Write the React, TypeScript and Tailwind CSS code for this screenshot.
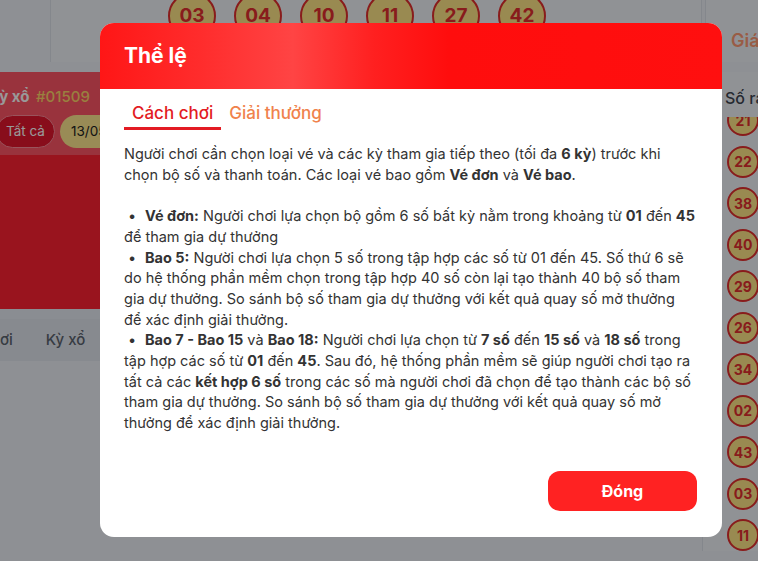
import * as React from "react";

const topBalls = ["03", "04", "10", "11", "27", "42"];
const sideBalls = ["21", "22", "38", "40", "29", "26", "34", "02", "43", "03", "11"];

const Bullet = () => <span className="inline-block w-[21px] pl-[4px]">•</span>;

const App = () => {
  const [tab, setTab] = React.useState(0);

  return (
    <div className="relative h-[561px] w-[758px] overflow-hidden bg-[#edf1f7] font-['Inter',sans-serif]">
      {/* Trang phía sau */}
      <div className="isolate flex flex-col gap-[10px]">
        <div className="flex h-[62px] gap-[3px] pl-[50px]">
          <div className="w-[652px] overflow-hidden border-x border-[#dde2ea] bg-[#f1f4f9]">
            <div className="-mt-[8px] flex gap-[18px] pl-[117px]">
              {topBalls.map((n) => (
                <div
                  key={n}
                  className="flex h-[48px] w-[48px] items-center justify-center rounded-full border-[2.5px] border-[#e3302f] bg-[#ffe788] text-[19px] font-bold text-[#e3302f]"
                >
                  {n}
                </div>
              ))}
            </div>
          </div>
          <div className="flex-1 overflow-hidden border-l border-[#dde2ea] bg-[#f1f4f9] pl-[25px] pt-[27px]">
            <span className="whitespace-nowrap text-[18px] font-semibold text-[#ff9a74]">Giá vé</span>
          </div>
        </div>

        <div className="flex gap-[12px]">
          <div className="-ml-[30px] w-[720px]">
            <div className="h-[83px] bg-[#ff5566] px-[19px] pt-[14px]">
              <div className="whitespace-nowrap text-[15px] font-bold text-white">
                Kỳ xổ <span className="ml-[3px] font-medium text-[#ffd56a]">#01509</span>
              </div>
              <div className="ml-[7px] mt-[6px] flex gap-[5px]">
                <span className="flex h-[33px] items-center rounded-full border border-[#ff8c99] bg-[#e3162d] px-[9px] text-[13.5px] text-white">
                  Tất cả
                </span>
                <span className="flex h-[33px] items-center rounded-full bg-[#ffe890] px-[11px] text-[13.5px] text-[#222]">
                  13/05
                </span>
              </div>
            </div>
            <div className="h-[154px] bg-[#ff2233]" />
            <div className="flex h-[52px] items-center whitespace-nowrap border-t-[10px] border-[#e6ebf3] bg-[#e2e7ef] text-[15px] font-medium text-[#5c6470]">
              <span className="ml-[-34px]">Người chơi</span>
              <span className="ml-[33px]">Kỳ xổ</span>
            </div>
          </div>
          <div className="flex-1 overflow-hidden border-l border-[#dde2ea] bg-[#f1f4f9]">
            <div className="relative z-[1] h-[45px] bg-[#f1f4f9] pl-[22px] pt-[14px]">
              <span className="whitespace-nowrap text-[16px] font-medium text-[#3e4652]">Số ra nhiều</span>
            </div>
            <div className="-mt-[13px] flex flex-col gap-[9.5px] pl-[24px]">
              {sideBalls.map((n, i) => (
                <div
                  key={i}
                  className="flex h-[32px] w-[32px] items-center justify-center rounded-full border-[2px] border-[#e3302f] bg-[#ffe788] text-[14px] font-bold text-[#e3302f]"
                >
                  {n}
                </div>
              ))}
            </div>
          </div>
        </div>
      </div>

      {/* Lớp phủ + hộp thoại */}
      <div className="absolute inset-0 z-10 bg-black/40">
        <div className="absolute left-[100px] top-[23px] flex w-[622px] flex-col overflow-hidden rounded-[14px] bg-white">
          <div className="flex h-[66px] items-center bg-[linear-gradient(90deg,#ff1616_0%,#ff2c2c_16%,#ff4444_31%,#ff2020_44%,#ff0d0d_56%,#ff0f0f_100%)] px-6">
            <h2 className="text-[21px] font-bold text-white">Thể lệ</h2>
          </div>

          <div className="mt-3 flex px-6">
            {["Cách chơi", "Giải thưởng"].map((t, i) => (
              <button
                key={t}
                onClick={() => setTab(i)}
                className={
                  tab === i
                    ? "border-b-[3px] border-[#e31b23] px-2 pb-[2px] text-[17px] font-medium leading-6 text-[#e31b23]"
                    : "border-b-[3px] border-transparent px-2 pb-[2px] text-[17px] font-medium leading-6 text-[#f0824c]"
                }
              >
                {t}
              </button>
            ))}
          </div>

          <div className="pl-6 pr-[10px] pt-[14px] text-[14.5px] leading-[20.7px] text-[#333]">
            <p>
              Người chơi cần chọn loại vé và các kỳ tham gia tiếp theo (tối đa <b>6 kỳ</b>) trước khi
              <br />
              chọn bộ số và thanh toán. Các loại vé bao gồm <b>Vé đơn</b> và <b>Vé bao</b>.
            </p>
            <p className="mt-[20.7px]">
              <Bullet />
              <b>Vé đơn:</b> Người chơi lựa chọn bộ gồm 6 số bất kỳ nằm trong khoảng từ <b>01</b> đến <b>45</b>
              <br />
              để tham gia dự thưởng
            </p>
            <p>
              <Bullet />
              <b>Bao 5:</b> Người chơi lựa chọn 5 số trong tập hợp các số từ 01 đến 45. Số thứ 6 sẽ
              <br />
              do hệ thống phần mềm chọn trong tập hợp 40 số còn lại tạo thành 40 bộ số tham
              <br />
              gia dự thưởng. So sánh bộ số tham gia dự thưởng với kết quả quay số mở thưởng
              <br />
              để xác định giải thưởng.
            </p>
            <p>
              <Bullet />
              <b>Bao 7 - Bao 15</b> và <b>Bao 18:</b> Người chơi lựa chọn từ <b>7 số</b> đến <b>15 số</b> và{" "}
              <b>18 số</b> trong
              <br />
              tập hợp các số từ <b>01</b> đến <b>45</b>. Sau đó, hệ thống phần mềm sẽ giúp người chơi tạo ra
              <br />
              tất cả các <b>kết hợp 6 số</b> trong các số mà người chơi đã chọn để tạo thành các bộ số
              <br />
              tham gia dự thưởng. So sánh bộ số tham gia dự thưởng với kết quả quay số mở
              <br />
              thưởng để xác định giải thưởng.
            </p>
          </div>

          <div className="mt-[37px] flex justify-end px-[25px] pb-[26px]">
            <button className="h-[40px] w-[149px] rounded-[12px] bg-[#ff2222] text-[16px] font-bold text-white">
              Đóng
            </button>
          </div>
        </div>
      </div>
    </div>
  );
};

export default App;
